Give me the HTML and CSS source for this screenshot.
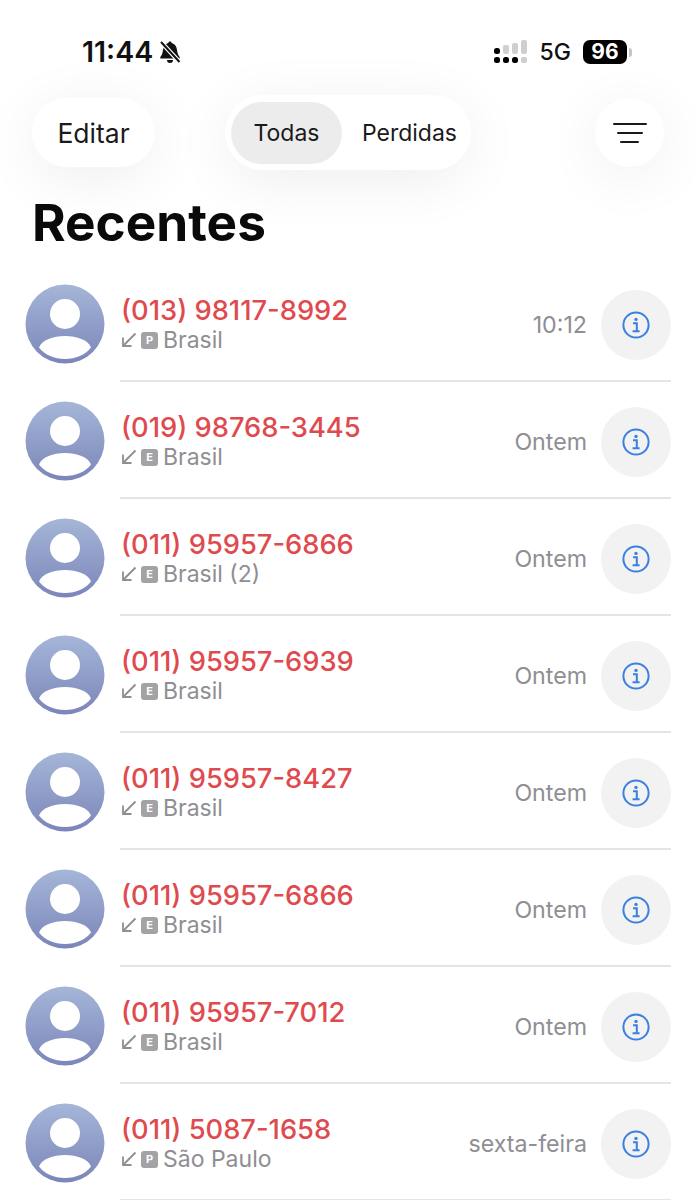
FILE: index.html
```html
<!DOCTYPE html>
<html lang="pt-BR">
<head>
  <meta charset="UTF-8">
  <meta name="viewport" content="width=device-width, initial-scale=1.0">
  <title>Recentes</title>
  <link rel="stylesheet" href="styles.css">
</head>
<body>
  <svg class="defs" width="0" height="0">
    <defs>
      <linearGradient id="avatar-fill" x1="0" y1="0" x2="0" y2="1">
        <stop offset="0" stop-color="#a5b6d8"/>
        <stop offset="1" stop-color="#7b86b9"/>
      </linearGradient>
      <symbol id="avatar" viewBox="0 0 80 80">
        <circle cx="40" cy="40" r="39.5" fill="url(#avatar-fill)"/>
        <circle cx="40" cy="30" r="15" fill="#fff"/>
        <path d="M14 63.5C17 56 28 52 40 52s23 4 26 11.5C60 71 51 75 40 75S20 71 14 63.5Z" fill="#fff"/>
      </symbol>
      <symbol id="arrow" viewBox="0 0 16 16">
        <path d="M14.5 1.5 2 14M2 5.5V14h8.5" fill="none" stroke="currentColor" stroke-width="1.8"/>
      </symbol>
      <symbol id="info" viewBox="0 0 28 28">
        <circle cx="14" cy="14" r="12.6" fill="none" stroke="currentColor" stroke-width="2"/>
        <circle cx="14" cy="8.4" r="1.7" fill="currentColor"/>
        <path d="M11 12.2h3.8v7.6M10.6 20.2h7" fill="none" stroke="currentColor" stroke-width="2"/>
      </symbol>
    </defs>
  </svg>

  <div class="phone">
    <div class="status-bar">
      <div class="status-left">
        <span class="clock">11:44</span>
        <svg class="bell" width="24" height="24" viewBox="0 0 24 24">
          <path d="M12 1.5c-1 0-1.6.7-1.7 1.6C7 4 5.4 6.6 5 10c-.4 3-1 5-2.7 7v1.5h19.4V17c-1.7-2-2.3-4-2.7-7-.4-3.4-2-6-5.3-6.9-.1-.9-.7-1.6-1.7-1.6Z" fill="#111"/>
          <path d="M9 20h6a3 3 0 0 1-6 0Z" fill="#111"/>
          <path d="M3 2 21.5 22" stroke="#fff" stroke-width="4.4"/>
          <path d="M3 2 21.5 22" stroke="#111" stroke-width="2"/>
        </svg>
      </div>
      <div class="status-right">
        <svg class="signal" width="36" height="24" viewBox="0 0 36 24">
          <rect x="1" y="8" width="6" height="6" rx="2.5" fill="#000"/>
          <rect x="1" y="17" width="6" height="6" rx="2.5" fill="#000"/>
          <rect x="10" y="5" width="6" height="9" rx="2" fill="#cfcfcf"/>
          <rect x="10" y="17" width="6" height="6" rx="2.5" fill="#000"/>
          <rect x="19" y="3" width="6" height="11" rx="2" fill="#cfcfcf"/>
          <rect x="19" y="17" width="6" height="6" rx="2.5" fill="#000"/>
          <rect x="28" y="0" width="6" height="14" rx="2" fill="#cfcfcf"/>
          <rect x="28" y="17" width="6" height="6" rx="2" fill="#cfcfcf"/>
        </svg>
        <span class="network">5G</span>
        <div class="battery"><span class="battery-level">96</span><span class="battery-cap"></span></div>
      </div>
    </div>

    <div class="toolbar">
      <button class="pill-btn">Editar</button>
      <div class="segment">
        <span class="segment-item active">Todas</span>
        <span class="segment-item">Perdidas</span>
      </div>
      <button class="filter-btn">
        <span class="bar bar-lg"></span>
        <span class="bar bar-md"></span>
        <span class="bar bar-sm"></span>
      </button>
    </div>

    <h1 class="page-title">Recentes</h1>

    <ul class="call-list" id="call-list">
      <li class="call-row">
        <svg class="avatar"><use href="#avatar"/></svg>
        <div class="call-body">
          <div class="call-info">
            <div class="call-number">(013) 98117-8992</div>
            <div class="call-meta"><svg class="arrow"><use href="#arrow"/></svg><span class="tag">P</span><span>Brasil</span></div>
          </div>
          <span class="call-time">10:12</span>
          <button class="info-btn"><svg class="info"><use href="#info"/></svg></button>
        </div>
      </li>
      <li class="call-row">
        <svg class="avatar"><use href="#avatar"/></svg>
        <div class="call-body">
          <div class="call-info">
            <div class="call-number">(019) 98768-3445</div>
            <div class="call-meta"><svg class="arrow"><use href="#arrow"/></svg><span class="tag">E</span><span>Brasil</span></div>
          </div>
          <span class="call-time">Ontem</span>
          <button class="info-btn"><svg class="info"><use href="#info"/></svg></button>
        </div>
      </li>
      <li class="call-row">
        <svg class="avatar"><use href="#avatar"/></svg>
        <div class="call-body">
          <div class="call-info">
            <div class="call-number">(011) 95957-6866</div>
            <div class="call-meta"><svg class="arrow"><use href="#arrow"/></svg><span class="tag">E</span><span>Brasil (2)</span></div>
          </div>
          <span class="call-time">Ontem</span>
          <button class="info-btn"><svg class="info"><use href="#info"/></svg></button>
        </div>
      </li>
      <li class="call-row">
        <svg class="avatar"><use href="#avatar"/></svg>
        <div class="call-body">
          <div class="call-info">
            <div class="call-number">(011) 95957-6939</div>
            <div class="call-meta"><svg class="arrow"><use href="#arrow"/></svg><span class="tag">E</span><span>Brasil</span></div>
          </div>
          <span class="call-time">Ontem</span>
          <button class="info-btn"><svg class="info"><use href="#info"/></svg></button>
        </div>
      </li>
      <li class="call-row">
        <svg class="avatar"><use href="#avatar"/></svg>
        <div class="call-body">
          <div class="call-info">
            <div class="call-number">(011) 95957-8427</div>
            <div class="call-meta"><svg class="arrow"><use href="#arrow"/></svg><span class="tag">E</span><span>Brasil</span></div>
          </div>
          <span class="call-time">Ontem</span>
          <button class="info-btn"><svg class="info"><use href="#info"/></svg></button>
        </div>
      </li>
      <li class="call-row">
        <svg class="avatar"><use href="#avatar"/></svg>
        <div class="call-body">
          <div class="call-info">
            <div class="call-number">(011) 95957-6866</div>
            <div class="call-meta"><svg class="arrow"><use href="#arrow"/></svg><span class="tag">E</span><span>Brasil</span></div>
          </div>
          <span class="call-time">Ontem</span>
          <button class="info-btn"><svg class="info"><use href="#info"/></svg></button>
        </div>
      </li>
      <li class="call-row">
        <svg class="avatar"><use href="#avatar"/></svg>
        <div class="call-body">
          <div class="call-info">
            <div class="call-number">(011) 95957-7012</div>
            <div class="call-meta"><svg class="arrow"><use href="#arrow"/></svg><span class="tag">E</span><span>Brasil</span></div>
          </div>
          <span class="call-time">Ontem</span>
          <button class="info-btn"><svg class="info"><use href="#info"/></svg></button>
        </div>
      </li>
      <li class="call-row">
        <svg class="avatar"><use href="#avatar"/></svg>
        <div class="call-body">
          <div class="call-info">
            <div class="call-number">(011) 5087-1658</div>
            <div class="call-meta"><svg class="arrow"><use href="#arrow"/></svg><span class="tag">P</span><span>São Paulo</span></div>
          </div>
          <span class="call-time">sexta-feira</span>
          <button class="info-btn"><svg class="info"><use href="#info"/></svg></button>
        </div>
      </li>
    </ul>
  </div>
</body>
</html>
```

FILE: styles.css
```css
html, body {
  margin: 0;
  padding: 0;
  background-color: #fff;
}
body {
  font-family: Inter, "Liberation Sans", sans-serif;
  color: #111;
}
.defs {
  display: block;
  height: 0;
}
.phone {
  height: 1200px;
  overflow: hidden;
}

/* status bar */
.status-bar {
  display: flex;
  justify-content: space-between;
  align-items: center;
  height: 36px;
  padding: 34px 64px 0 82px;
}
.status-left {
  display: flex;
  align-items: center;
  gap: 5px;
}
.clock {
  font-size: 28.5px;
  font-weight: 600;
  line-height: 36px;
}
.status-right {
  display: flex;
  align-items: center;
}
.network {
  font-size: 23px;
  font-weight: 500;
  margin-left: 11px;
}
.battery {
  display: flex;
  align-items: center;
  margin-left: 12px;
}
.battery-level {
  display: block;
  width: 44px;
  height: 24px;
  line-height: 24px;
  border-radius: 7px;
  background-color: #000;
  color: #fff;
  font-size: 21px;
  font-weight: 700;
  text-align: center;
}
.battery-cap {
  width: 3px;
  height: 9px;
  margin-left: 2px;
  border-radius: 0 3px 3px 0;
  background-color: #c4c4c4;
}

/* toolbar */
.toolbar {
  display: flex;
  justify-content: space-between;
  align-items: center;
  height: 75px;
  margin-top: 25px;
  padding: 0 32px;
}
.pill-btn {
  width: 123px;
  height: 69px;
  border: none;
  border-radius: 35px;
  background-color: #fff;
  box-shadow: 0 10px 60px rgba(0, 0, 0, 0.07);
  color: #1a1a1a;
  font-family: inherit;
  font-size: 26.5px;
}
.segment {
  display: flex;
  align-items: center;
  width: 246px;
  height: 75px;
  box-sizing: border-box;
  margin-right: 54px;
  padding: 0 6px;
  border-radius: 38px;
  background-color: #fff;
  box-shadow: 0 10px 60px rgba(0, 0, 0, 0.07);
}
.segment-item {
  flex: 1;
  padding-left: 12px;
  font-size: 23px;
  line-height: 62px;
  text-align: center;
  color: #1a1a1a;
}
.segment-item.active {
  flex: 0 0 111px;
  padding-left: 0;
  border-radius: 31px;
  background-color: #ececec;
}
.filter-btn {
  display: flex;
  flex-direction: column;
  align-items: center;
  justify-content: center;
  gap: 7px;
  width: 69px;
  height: 69px;
  padding: 0;
  border: none;
  border-radius: 50%;
  background-color: #fff;
  box-shadow: 0 10px 60px rgba(0, 0, 0, 0.07);
}
.bar {
  display: block;
  height: 2px;
  border-radius: 2px;
  background-color: #1a1a1a;
}
.bar-lg {
  width: 34px;
}
.bar-md {
  width: 26px;
}
.bar-sm {
  width: 19px;
}

/* title */
.page-title {
  margin: 23px 0 0 32px;
  font-size: 51.3px;
  font-weight: 700;
  line-height: 58px;
  color: #0a0a0a;
}

/* call list */
.call-list {
  list-style: none;
  margin: 14px 0 0;
  padding: 0;
}
.call-row {
  display: flex;
  height: 117px;
  padding-left: 25px;
}
.avatar {
  flex: 0 0 80px;
  width: 80px;
  height: 80px;
  margin-top: 19px;
}
.call-body {
  flex: 1;
  display: flex;
  align-items: center;
  height: 117px;
  box-sizing: border-box;
  margin: 0 25px 0 15px;
  padding-top: 4px;
  border-bottom: 2px solid #e4e4e4;
}
.call-info {
  flex: 1;
  padding-left: 1px;
}
.call-number {
  font-size: 27.3px;
  font-weight: 500;
  line-height: 31px;
  color: #df4a4e;
}
.call-meta {
  display: flex;
  align-items: center;
  font-size: 23px;
  line-height: 28px;
  color: #8e8e93;
}
.arrow {
  width: 16px;
  height: 16px;
  margin: 0 4px 0 0;
  color: #8e8e93;
}
.tag {
  width: 17px;
  height: 17px;
  margin-right: 5px;
  border-radius: 3px;
  background-color: #a3a3a6;
  color: #fff;
  font-size: 11px;
  font-weight: 700;
  line-height: 17px;
  text-align: center;
}
.call-time {
  font-size: 23.2px;
  color: #8e8e93;
  margin-right: 14px;
}
.info-btn {
  display: flex;
  align-items: center;
  justify-content: center;
  width: 70px;
  height: 70px;
  padding: 0;
  border: none;
  border-radius: 50%;
  background-color: #f2f2f3;
}
.info {
  width: 28px;
  height: 28px;
  color: #3a80e0;
}
```
